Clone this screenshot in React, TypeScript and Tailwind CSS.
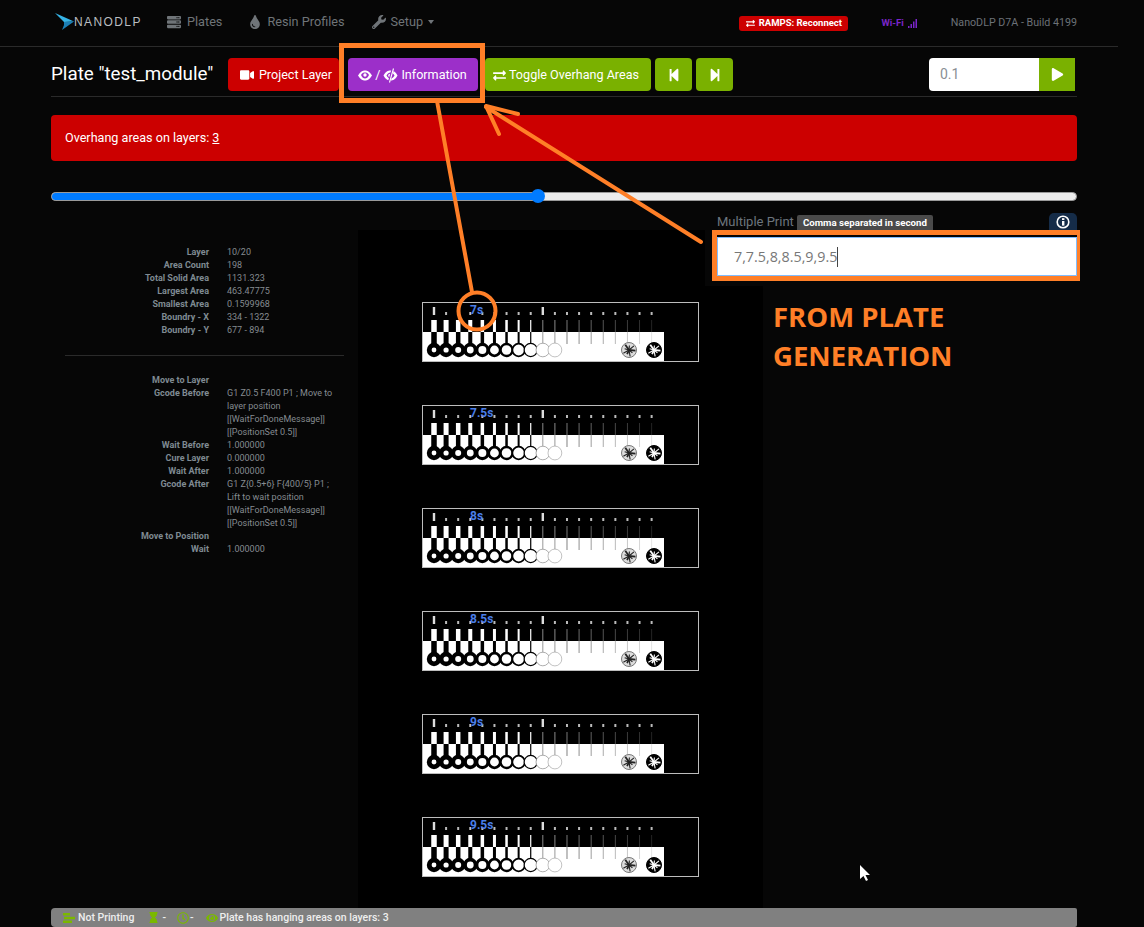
import {
  FaServer,
  FaTint,
  FaWrench,
  FaVideo,
  FaEye,
  FaExchangeAlt,
  FaStepBackward,
  FaStepForward,
  FaPlay,
  FaHourglass,
  FaRegClock,
} from "react-icons/fa";

const printInfo = [
  ["Layer", "10/20"],
  ["Area Count", "198"],
  ["Total Solid Area", "1131.323"],
  ["Largest Area", "463.47775"],
  ["Smallest Area", "0.1599968"],
  ["Boundry - X", "334 - 1322"],
  ["Boundry - Y", "677 - 894"],
];

const gcodeInfo = [
  ["Move to Layer", ""],
  ["Gcode Before", "G1 Z0.5 F400 P1 ; Move to layer position [[WaitForDoneMessage]] [[PositionSet 0.5]]"],
  ["Wait Before", "1.000000"],
  ["Cure Layer", "0.000000"],
  ["Wait After", "1.000000"],
  ["Gcode After", "G1 Z{0.5+6} F{400/5} P1 ; Lift to wait position [[WaitForDoneMessage]] [[PositionSet 0.5]]"],
  ["Move to Position", ""],
  ["Wait", "1.000000"],
];

const labels = ["7s", "7.5s", "8s", "8.5s", "9s", "9.5s"];

const barWidths = [5.5, 5, 4.5, 4, 3.5, 3, 2.5, 2, 1.2, 1, 1];
const holeSizes = [2.4, 2.6, 3, 3.4, 4, 4.4, 4.8, 5.4, 6, 6.4, 6.6];

function InfoRows({ rows }: { rows: string[][] }) {
  return (
    <div className="grid grid-cols-[158px_117px] gap-x-[18px] text-[9px] leading-[13px]">
      {rows.map(([label, value]) => (
        <div key={label} className="contents">
          <div className="text-right font-bold text-[#7f8a92]">{label}</div>
          <div className="text-[#858b90]">{value}</div>
        </div>
      ))}
    </div>
  );
}

function Spokes({ cx, dark }: { cx: number; dark: boolean }) {
  const angles = [5, 40, 80, 115, 150, 195, 235, 275, 320];
  return (
    <g>
      <circle cx={cx} cy={48} r={7.5} fill={dark ? "#000" : "#ddd"} stroke={dark ? "#000" : "#777"} strokeWidth={1} />
      {angles.map((a, i) => (
        <line
          key={a}
          x1={cx}
          y1={48}
          x2={cx + (i % 2 ? 4.5 : 6.5) * Math.cos((a * Math.PI) / 180)}
          y2={48 + (i % 2 ? 4.5 : 6.5) * Math.sin((a * Math.PI) / 180)}
          stroke={dark ? "#fff" : "#222"}
          strokeWidth={i % 3 ? 1.1 : 1.8}
        />
      ))}
    </g>
  );
}

function TestStrip({ label }: { label: string }) {
  const ticks = Array.from({ length: 19 }, (_, i) => 12 + i * 12.09);
  return (
    <div className="relative h-[60px] w-[277px]">
      <svg width="277" height="60" viewBox="0 0 277 60" className="block">
        <rect x="0" y="0" width="277" height="60" fill="#000" />
        <rect x="0" y="30" width="242" height="30" fill="#fff" />
        {ticks.map((x, i) => {
          const big = i === 0 || i === 9;
          return (
            <rect
              key={x}
              x={x - (big ? 1.2 : 1)}
              y={big ? 5 : 10}
              width={big ? 2.4 : 2}
              height={big ? 8 : 3}
              fill={big ? "#ddd" : "#bbb"}
            />
          );
        })}
        {ticks.map((x, i) => {
          if (i > 10) {
            const shade = 120 - (i - 11) * 12;
            const light = 130 + (i - 11) * 14;
            return (
              <g key={x}>
                <rect x={x - 0.5} y={18} width={1} height={12} fill={`rgb(${shade},${shade},${shade})`} />
                <rect x={x - 0.5} y={30} width={1} height={12} fill={`rgb(${light},${light},${light})`} />
              </g>
            );
          }
          const w = barWidths[i];
          const hole = holeSizes[i];
          const ink = i > 8 ? "#999" : "#000";
          return (
            <g key={x}>
              <rect x={x - w / 2} y={18} width={w} height={12} fill={i > 8 ? "#888" : "#fff"} />
              <rect x={x - w / 2} y={30} width={w} height={12} fill={ink} />
              <circle cx={x} cy={48} r={(7.2 + hole) / 2} fill="#fff" stroke={ink} strokeWidth={7.2 - hole} />
            </g>
          );
        })}
        <Spokes cx={207} dark={false} />
        <Spokes cx={232} dark={true} />
        <rect x="0.5" y="0.5" width="276" height="59" fill="none" stroke="#bdbdbd" strokeWidth="1" />
      </svg>
      <span className="absolute left-[48px] top-[1px] text-[12px] font-bold leading-[14px] text-[#4a7ee8]">{label}</span>
    </div>
  );
}

function EyeOpen() {
  return (
    <svg width="14" height="11" viewBox="0 0 14 11">
      <path d="M0 5.5 C2.5 1.5 4.5 0.5 7 0.5 C9.5 0.5 11.5 1.5 14 5.5 C11.5 9.5 9.5 10.5 7 10.5 C4.5 10.5 2.5 9.5 0 5.5 Z" fill="#fff" />
      <path d="M3 5 C4 3 5.5 2.5 7 2.5 C8.5 2.5 10 3 11 5 C10 7.5 8.5 8.5 7 8.5 C5.5 8.5 4 7.5 3 5 Z" fill="#9c2fc9" />
      <circle cx="7" cy="5" r="1.7" fill="#fff" />
    </svg>
  );
}

function EyeSlashed() {
  return (
    <svg width="15" height="15" viewBox="0 0 15 15">
      <path d="M0.5 7.5 C2.5 3.5 5 2.5 7.5 2.5 C10 2.5 12.5 3.5 14.5 7.5 C12.5 11.5 10 12.5 7.5 12.5 C5 12.5 2.5 11.5 0.5 7.5 Z" fill="#fff" />
      <path d="M3.5 7.5 C4.5 5.5 6 4.5 7.5 4.5 C9 4.5 10.5 5.5 11.5 7.5 C10.5 9.5 9 10.5 7.5 10.5 C6 10.5 4.5 9.5 3.5 7.5 Z" fill="#9c2fc9" />
      <circle cx="7" cy="7.5" r="1.8" fill="#fff" />
      <line x1="10" y1="0.5" x2="6" y2="14.5" stroke="#9c2fc9" strokeWidth="2.6" />
      <line x1="10.5" y1="0.5" x2="6.5" y2="14.5" stroke="#fff" strokeWidth="1.1" />
    </svg>
  );
}

function Annotations() {
  return (
    <svg width="1144" height="927" viewBox="0 0 1144 927" className="pointer-events-none absolute left-0 top-0">
      <path fillRule="evenodd" fill="#ff7f27" d="M339 43 H485 V103 H339 Z M344 48 V98 H480 V48 Z" />
      <path fillRule="evenodd" fill="#ff7f27" d="M712 230 H1080 V281 H712 Z M717 235 V276 H1077 V235 Z" />
      <g fill="none" stroke="#ff7f27" strokeLinecap="round" strokeLinejoin="round">
        <line x1="437" y1="101" x2="472" y2="292" strokeWidth="4" />
        <circle cx="477" cy="311" r="18.5" strokeWidth="4" />
        <line x1="701" y1="242" x2="486" y2="107" strokeWidth="4" />
        <polyline points="518,114 486,106 499,134" strokeWidth="4" />
      </g>
      {/* mouse cursor */}
      <path d="M860 865 L860 879 L863.5 876 L866 881 L868 880 L865.5 875 L870 875 Z" fill="#fff" />
    </svg>
  );
}

export default function App() {
  return (
    <div className="relative flex h-[927px] flex-col overflow-hidden bg-[#060606] font-[Roboto,sans-serif] text-white">
      {/* Navbar */}
      <nav className="flex h-[47px] w-[1118px] shrink-0 items-center justify-between border-b border-[#2a2a2a] pl-[55px] pr-[41px]">
        <div className="mb-[2px] flex items-center text-[12.7px] text-[#6f7478]">
          <svg width="20" height="18" viewBox="0 0 20 18" className="mr-[-1px]">
            <polygon points="0,0 19,8.5 9,9" fill="#35b3e6" />
            <polygon points="9,9 19,8.5 7,17 9,12" fill="#1c7fb5" />
          </svg>
          <span className="w-[93px] font-['Liberation_Sans',sans-serif] text-[12px] tracking-[1.4px] text-[#b9bdc0]">NANODLP</span>
          <FaServer className="text-[14px]" />
          <span className="ml-[6px]">Plates</span>
          <FaTint className="ml-[26px] text-[14px]" />
          <span className="ml-[5px]">Resin Profiles</span>
          <FaWrench className="ml-[27px] text-[14px]" />
          <span className="ml-[5px]">Setup</span>
          <span className="ml-[5px] h-0 w-0 border-x-[3.5px] border-t-[4px] border-x-transparent border-t-[#6f7478]" />
        </div>
        <div className="mt-[1px] flex items-center">
          <div className="flex h-[15px] w-[109px] items-center justify-center gap-[4px] rounded-[3px] bg-[#cc0000] text-[9.5px] font-bold">
            <FaExchangeAlt className="text-[9px]" />
            RAMPS: Reconnect
          </div>
          <span className="ml-[33px] text-[9.5px] font-bold text-[#7a25c9]">Wi-Fi</span>
          <svg width="10" height="10" viewBox="0 0 10 10" className="ml-[4px]">
            <rect x="0" y="8" width="1.5" height="2" fill="#7a25c9" />
            <rect x="2.5" y="6" width="1.5" height="4" fill="#7a25c9" />
            <rect x="5" y="3.5" width="1.5" height="6.5" fill="#7a25c9" />
            <rect x="7.5" y="1" width="1.5" height="9" fill="#7a25c9" />
          </svg>
          <span className="ml-[33px] text-[10.7px] text-[#6c7177]">NanoDLP D7A - Build 4199</span>
        </div>
      </nav>

      <main className="ml-[51px] flex w-[1026px] flex-1 flex-col">
        {/* Title row */}
        <div className="mt-[11px] flex h-[39px] items-start border-b border-[#2a2a2a] pb-[5px] text-[12.6px]">
          <h1 className="w-[177px] text-[18.8px] font-normal leading-[33px]">Plate "test_module"</h1>
          <button className="flex h-[33px] w-[111px] items-center justify-center gap-[5px] rounded-[4px] bg-[#cc0000] pl-[5px] pt-[1px]">
            <FaVideo className="text-[14px]" />
            Project Layer
          </button>
          <button className="ml-[9px] flex h-[33px] w-[130px] items-center justify-center gap-[3px] rounded-[4px] bg-[#9c2fc9] pr-[1px] pt-[1px]">
            <EyeOpen />
            <span>/</span>
            <EyeSlashed />
            Information
          </button>
          <button className="ml-[7px] flex h-[33px] w-[166px] items-center justify-center gap-[3px] rounded-[4px] bg-[#7ab100] pr-[4px] pt-[1px]">
            <FaExchangeAlt className="text-[13px]" />
            Toggle Overhang Areas
          </button>
          <button className="ml-[4px] flex h-[33px] w-[37px] items-center justify-center rounded-[4px] bg-[#7ab100]">
            <FaStepBackward className="text-[14px]" />
          </button>
          <button className="ml-[4px] flex h-[33px] w-[37px] items-center justify-center rounded-[4px] bg-[#7ab100]">
            <FaStepForward className="text-[14px]" />
          </button>
          <div className="ml-[196px] flex h-[33px] w-[146px]">
            <div className="flex w-[110px] items-center rounded-l-[4px] bg-white pl-[11px] text-[14px] text-[#8a8f94]">0.1</div>
            <div className="flex w-[36px] items-center justify-center bg-[#7ab100]">
              <FaPlay className="text-[13px]" />
            </div>
          </div>
        </div>

        {/* Overhang alert */}
        <div className="mt-[18px] flex h-[46px] items-center rounded-[4px] bg-[#cc0000] px-[14px] text-[12.6px]">
          <span>
            Overhang areas on layers: <u>3</u>
          </span>
        </div>

        {/* Layer slider */}
        <div className="relative mt-[31px] flex h-[9px] rounded-full border border-[#9a9a9a] bg-[#ececec]">
          <div className="h-full w-[486px] rounded-l-full bg-[#007bff]" />
          <span className="absolute left-[479px] top-[-4px] h-[14px] w-[14px] rounded-full bg-[#007bff]" />
        </div>

        {/* Info, preview and multiple print */}
        <div className="mt-[29px] flex flex-1 items-stretch">
          <aside className="w-[307px] pt-[16px]">
            <InfoRows rows={printInfo} />
            <div className="my-[18px] ml-[14px] mr-[14px] h-px bg-[#2a2a2a]" />
            <InfoRows rows={gcodeInfo} />
          </aside>
          <section className="flex w-[405px] flex-col items-center gap-[43px] bg-black pt-[72px]">
            {labels.map((label) => (
              <TestStrip key={label} label={label} />
            ))}
          </section>
          <aside className="relative ml-[-58px] mt-[-17px] h-[73px] w-[372px] bg-[#060606] pl-[12px]">
            <div className="flex h-[24px] items-start">
              <span className="text-[13px] leading-[18px] text-[#6c757d]">Multiple Print</span>
              <span className="ml-[3px] mt-[2px] rounded-t-[2px] bg-[#4a4a4a] px-[6px] text-[9.7px] font-bold leading-[15px]">Comma separated in second</span>
              <span className="ml-auto flex h-[17px] w-[28px] items-center justify-center rounded-t-[5px] bg-[#152c48]">
                <svg width="14" height="14" viewBox="0 0 14 14">
                  <circle cx="7" cy="7" r="5.8" fill="none" stroke="#fff" strokeWidth="1.6" />
                  <rect x="6" y="6" width="2.4" height="4.6" fill="#fff" />
                  <rect x="6" y="3.2" width="2.4" height="1.8" fill="#fff" />
                </svg>
              </span>
            </div>
            <div className="flex h-[39px] items-center border border-[#80bdff] bg-white pl-[16px] font-['Open_Sans',sans-serif] text-[14.3px] text-[#777]">
              7,7.5,8,8.5,9,9.5
              <span className="h-[20px] w-px bg-[#444]" />
            </div>
          </aside>
        </div>

        {/* Status bar */}
        <footer className="flex h-[19px] shrink-0 items-center rounded-l-[4px] rounded-r-[2px] bg-[#808080] pl-[12px] text-[10.5px] font-medium text-[#eee]">
          <svg width="12" height="10" viewBox="0 0 12 10">
            <rect x="0" y="0" width="7" height="2.5" fill="#7ab800" />
            <rect x="1" y="3.8" width="11" height="2.5" fill="#7ab800" />
            <rect x="0" y="7.5" width="9" height="2.5" fill="#7ab800" />
          </svg>
          <span className="ml-[3px]">Not Printing</span>
          <FaHourglass className="ml-[14px] text-[11px] text-[#7ab800]" />
          <span className="ml-[3px]">-</span>
          <FaRegClock className="ml-[11px] text-[12px] text-[#7ab800]" />
          <span className="ml-[1px]">-</span>
          <FaEye className="ml-[12px] text-[12px] text-[#7ab800]" />
          <span className="ml-[2px]">Plate has hanging areas on layers: 3</span>
        </footer>
      </main>

      {/* Hand-drawn annotations over the page */}
      <div className="absolute left-[773px] top-[297px] font-['Open_Sans',sans-serif] text-[27.5px] font-bold leading-[39px] text-[#ff7f27]">
        FROM PLATE
        <br />
        GENERATION
      </div>
      <Annotations />
    </div>
  );
}
